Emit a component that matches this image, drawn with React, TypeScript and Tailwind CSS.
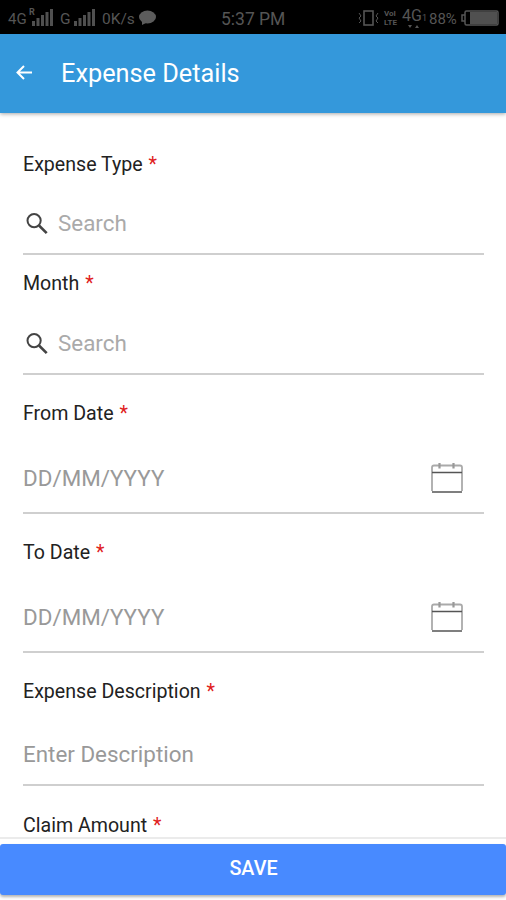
import { clsx } from "clsx";

type IconType = "search" | "calendar";

interface Field {
  label: string;
  placeholder: string;
  icon?: IconType;
  className: string;
  inputClassName: string;
}

const fields: Field[] = [
  { label: "Expense Type", placeholder: "Search", icon: "search", className: "mt-10", inputClassName: "mt-[15px] h-[63px]" },
  { label: "Month", placeholder: "Search", icon: "search", className: "mt-[17px]", inputClassName: "mt-4 h-[63px]" },
  { label: "From Date", placeholder: "DD/MM/YYYY", icon: "calendar", className: "mt-[27px]", inputClassName: "mt-[17px] h-[71px]" },
  { label: "To Date", placeholder: "DD/MM/YYYY", icon: "calendar", className: "mt-[27px]", inputClassName: "mt-[17px] h-[71px]" },
  { label: "Expense Description", placeholder: "Enter Description", className: "mt-[27px]", inputClassName: "mt-[19px] h-[63px]" },
];

const SearchIcon = () => (
  <svg className="ml-0.5 mr-2.5 mt-0.5 h-[23px] w-[23px] shrink-0" viewBox="0 0 23 23" fill="none" stroke="#444">
    <circle cx="9.1" cy="8.6" r="6.6" strokeWidth="2" />
    <path d="M14 13.5L21.7 21.2" strokeWidth="2.6" />
  </svg>
);

const CalendarIcon = () => (
  <svg className="ml-auto mr-[21px] mt-px h-8 w-8 shrink-0" viewBox="0 0 32 32" fill="none">
    <path d="M1 29V5.5Q1 3.5 3 3.5H29Q31 3.5 31 5.5V29" stroke="#aaa" strokeWidth="1.8" />
    <path d="M8.5 1V6.5M22.5 1V6.5" stroke="#999" strokeWidth="2.2" />
    <path d="M1 10.5H31M1 30H31" stroke="#555" strokeWidth="1.6" />
  </svg>
);

const SignalBars = () => (
  <svg className="h-[17px] w-[21px]" viewBox="0 0 21 17" fill="#505050">
    <path d="M0 12h3v5H0zM4.5 9h3v8h-3zM9 6h3v11H9zM13.5 3h3v14h-3zM18 0h3v17h-3z" />
  </svg>
);

const Label = ({ text }: { text: string }) => (
  <div className="h-6 whitespace-nowrap text-[19.6px] leading-6 text-[#222]">
    {text} <span className="ml-px text-[#e02020]">*</span>
  </div>
);

const FormField = ({ label, placeholder, icon, className, inputClassName }: Field) => (
  <div className={className}>
    <Label text={label} />
    <div className={clsx("flex items-center border-b-2 border-[#cfcfcf]", inputClassName)}>
      {icon === "search" && <SearchIcon />}
      <span className={clsx("text-[22.4px] leading-7", icon === "search" ? "text-[#aaa]" : "text-[#999]")}>{placeholder}</span>
      {icon === "calendar" && <CalendarIcon />}
    </div>
  </div>
);

const StatusBar = () => (
  <div className="flex h-[34px] shrink-0 items-center bg-black text-[#555]">
    <div className="flex w-[221px] items-center pl-2">
      <span className="w-[20px] pt-1 text-[15px] leading-5">4G</span>
      <div className="relative ml-1">
        <SignalBars />
        <span className="absolute -left-[3px] -top-0.5 text-[9px] font-bold leading-[10px]">R</span>
      </div>
      <span className="ml-[7px] w-[14px] pt-1 text-[15.5px] leading-5">G</span>
      <SignalBars />
      <span className="ml-[7px] w-[37px] whitespace-nowrap pt-1 text-[15.5px] leading-5">0K/s</span>
      <svg className="mt-0.5 h-4 w-[17px]" viewBox="0 0 17 16" fill="#5c5c5c">
        <ellipse cx="8.5" cy="7" rx="8.5" ry="6.5" />
        <path d="M3 10L3 15L9 12z" />
      </svg>
    </div>
    <span className="w-[137px] pt-1 text-[17.5px] leading-5">5:37 PM</span>
    <svg className="mt-0.5 h-4 w-[21px]" viewBox="0 0 21 16" fill="none" stroke="#555">
      <rect x="6" y="1" width="9" height="14" strokeWidth="1.6" />
      <path d="M1 3l2 3-2 2 2 3-2 2M20 3l-2 3 2 2-2 3 2 2" />
    </svg>
    <div className="ml-[5px] w-[18px] pt-0.5 text-[8px] font-bold">
      <div className="h-[9px] leading-[9px]">VoI</div>
      <div className="h-[9px] leading-[9px]">LTE</div>
    </div>
    <div className="w-[27px] pt-0.5">
      <div className="h-[17px] whitespace-nowrap text-[16px] leading-[17px]">
        4G<span className="text-[9px]">1</span>
      </div>
      <svg className="ml-1.5 h-[5px] w-3" viewBox="0 0 12 5" fill="#555">
        <path d="M0 1h4L2 4zM7 4h4L9 1z" />
      </svg>
    </div>
    <span className="w-[32px] pt-1 text-[15px] leading-5">88%</span>
    <svg className="mt-0.5 h-4 w-[38px]" viewBox="0 0 38 16" fill="none">
      <path d="M4 5H1V11H4" stroke="#555" strokeWidth="1.5" />
      <rect x="4" y="1" width="33" height="14" rx="1.5" stroke="#555" strokeWidth="1.5" />
      <path d="M9 2H36V14H9z" fill="#505050" />
    </svg>
  </div>
);

export default function App() {
  return (
    <div className="flex h-[900px] w-[506px] flex-col overflow-hidden bg-white font-[Roboto,sans-serif]">
      <StatusBar />
      <header className="z-10 flex h-[79px] shrink-0 items-center bg-[#3498db] text-white shadow-[0_1px_4px_rgba(0,0,0,0.35)]">
        <svg className="mb-0.5 ml-4 mr-[29px] h-4 w-4" viewBox="0 0 16 16" fill="none" stroke="white" strokeWidth="2">
          <path d="M8 1L1.5 7.5L8 14M1.5 7.5H16" />
        </svg>
        <h1 className="text-[25.3px] leading-8">Expense Details</h1>
      </header>
      <main className="h-[724px] shrink-0 overflow-hidden pl-[23px] pr-[22px]">
        {fields.map((field) => (
          <FormField key={field.label} {...field} />
        ))}
        <div className="mt-7">
          <Label text="Claim Amount" />
        </div>
      </main>
      <footer className="flex-1 border-t-2 border-[#ebebeb] pt-[5px]">
        <button className="flex h-[51px] w-full items-center justify-center rounded-[3px] bg-[#488aff] pb-0.5 pl-px text-[19.8px] font-medium text-white shadow-[0_2px_3px_rgba(0,0,0,0.3)]">
          SAVE
        </button>
      </footer>
    </div>
  );
}
